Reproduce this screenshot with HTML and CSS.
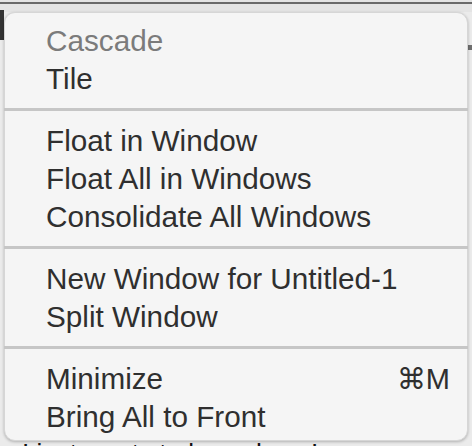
FILE: index.html
```html
<!DOCTYPE html>
<html>
<head>
<meta charset="utf-8">
<link rel="stylesheet" href="styles.css">
</head>
<body>
<div class="desktop">
  <div class="topline"></div>
  <div class="left-dark"></div>
  <div class="right-mark"></div>
  <p class="behind-text">I just wants to know how I can save</p>
  <div class="menu">
    <div class="group">
      <div class="item disabled">Cascade</div>
      <div class="item">Tile</div>
    </div>
    <div class="sep"></div>
    <div class="group">
      <div class="item">Float in Window</div>
      <div class="item">Float All in Windows</div>
      <div class="item">Consolidate All Windows</div>
    </div>
    <div class="sep"></div>
    <div class="group">
      <div class="item">New Window for Untitled-1</div>
      <div class="item">Split Window</div>
    </div>
    <div class="sep"></div>
    <div class="group">
      <div class="item"><span>Minimize</span><span class="key">⌘M</span></div>
      <div class="item">Bring All to Front</div>
    </div>
  </div>
</div>
</body>
</html>
```
FILE: styles.css
```css
html, body {
  margin: 0;
  padding: 0;
}
body {
  width: 472px;
  height: 446px;
  overflow: hidden;
  background: #ececec;
  font-family: "Liberation Sans", "DejaVu Sans", sans-serif;
}
.desktop {
  position: relative;
  width: 472px;
  height: 446px;
  overflow: hidden;
  background: linear-gradient(#e4e4e4 0, #e4e4e4 12px, #ebebeb 12px);
}
.topline {
  height: 2px;
  margin-top: 2px;
  background: #6a6a6a;
}
.left-dark {
  position: absolute;
  left: 0;
  top: 10px;
  width: 4px;
  height: 30px;
  background: #333;
}
.right-mark {
  position: absolute;
  right: 0;
  top: 45px;
  width: 4px;
  height: 5px;
  background: #6f6f6f;
}
.behind-text {
  position: absolute;
  left: 22px;
  top: 438px;
  margin: 0;
  font-size: 26px;
  line-height: 30px;
  color: #111;
  white-space: nowrap;
}
.menu {
  position: absolute;
  left: 4px;
  top: 12px;
  width: 464px;
  height: 429px;
  box-sizing: border-box;
  padding: 9px 0 6px;
  background: #f5f5f5;
  border: 1px solid #d6d6d6;
  border-radius: 11px;
  box-shadow: 0 1px 3px rgba(0, 0, 0, 0.25);
}
.group {
  display: flex;
  flex-direction: column;
}
.item {
  display: flex;
  justify-content: space-between;
  height: 38px;
  line-height: 38px;
  padding: 0 17px 0 41px;
  font-size: 29.7px;
  color: #2f2f2f;
  white-space: nowrap;
}
.item.disabled {
  color: #7b7b7b;
}
.key {
  font-size: 29px;
}
.sep {
  height: 3px;
  margin: 10px -1px 11px;
  background: #c6c6c6;
}
```
